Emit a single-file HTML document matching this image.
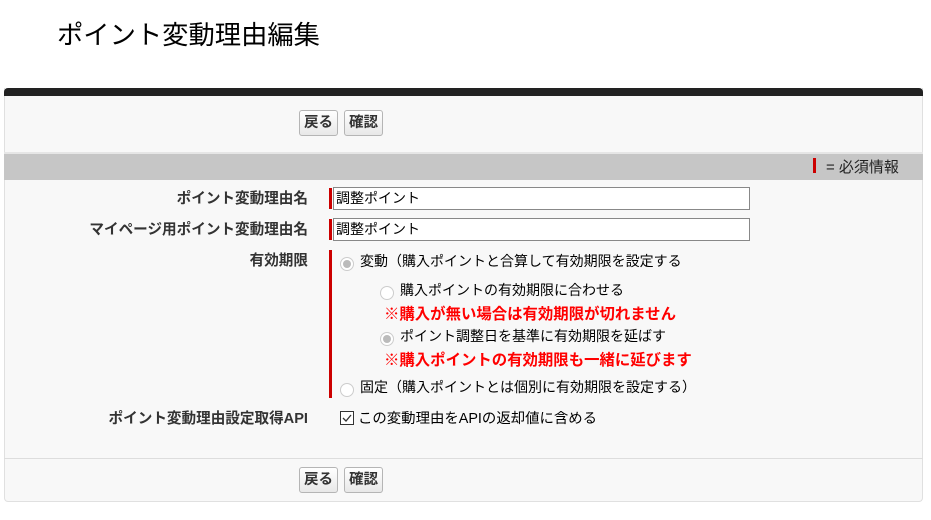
<!DOCTYPE html>
<html><head><meta charset="utf-8"><style>
*{margin:0;padding:0;box-sizing:border-box}
body{width:931px;height:520px;background:#fff;font-family:"Liberation Sans","Noto Sans CJK JP",sans-serif;font-size:13px;color:#000;position:relative;overflow:hidden}
.abs{position:absolute}
h1{position:absolute;left:57px;top:13px;font-size:26.3px;font-weight:normal;white-space:nowrap}
.panel{position:absolute;left:4px;top:88px;width:919px;height:414px;background:#f8f8f8;border:1px solid #e0e0e0;border-top:none;border-radius:0 0 4px 4px}
.bar{position:absolute;left:4px;top:88px;width:919px;height:8px;background:#222;border-radius:4px 4px 0 0}
.btn{position:absolute;height:26px;border:1px solid #b5b5b5;border-radius:3px;background:linear-gradient(#fff,#e8e8e8);font-weight:bold;font-size:14.5px;color:#333;line-height:24px;text-align:center;padding:0 4px}
.gray{position:absolute;left:4px;top:152px;width:919px;height:28px;background:#c6c6c6;border-top:2px solid #e6e6e6}
.lbl{position:absolute;right:623px;font-weight:bold;color:#333;font-size:14.6px;white-space:nowrap}
.inp{position:absolute;left:333px;width:417px;height:23px;border:1px solid #888;background:#fff;font-size:14px;line-height:21px;padding-left:2px}
.red{position:absolute;left:329px;width:3px;background:#c00}
.t{position:absolute;white-space:nowrap;font-size:14px}
.rt{position:absolute;white-space:nowrap;font-size:15.4px;color:#f00;font-weight:bold}
.rad{position:absolute;width:14px;height:14px;border-radius:50%;border:1px solid #ccc;background:#fff}
.rad.on::after{content:"";position:absolute;left:2px;top:2px;width:8px;height:8px;border-radius:50%;background:#bbb}
</style></head><body>
<h1>ポイント変動理由編集</h1>
<div class="panel"></div>
<div class="bar"></div>
<div class="btn" style="left:299px;top:110px">戻る</div>
<div class="btn" style="left:344px;top:110px">確認</div>
<div class="gray"></div>
<div class="abs" style="left:813px;top:158px;width:3px;height:15px;background:#c00"></div>
<div class="abs" style="left:826px;top:156px;font-size:15px;color:#222">= 必須情報</div>
<div class="lbl" style="top:187px">ポイント変動理由名</div>
<div class="red" style="top:188px;height:21px"></div>
<div class="inp" style="top:187px">調整ポイント</div>
<div class="lbl" style="top:218px">マイページ用ポイント変動理由名</div>
<div class="red" style="top:219px;height:21px"></div>
<div class="inp" style="top:218px">調整ポイント</div>
<div class="lbl" style="top:249px">有効期限</div>
<div class="red" style="top:250px;height:148px"></div>
<div class="rad on" style="left:340px;top:257px"></div>
<div class="t" style="left:360px;top:251px">変動（購入ポイントと合算して有効期限を設定する</div>
<div class="rad" style="left:380px;top:286px"></div>
<div class="t" style="left:400px;top:280px">購入ポイントの有効期限に合わせる</div>
<div class="rt" style="left:384px;top:302px">※購入が無い場合は有効期限が切れません</div>
<div class="rad on" style="left:380px;top:332px"></div>
<div class="t" style="left:400px;top:326px">ポイント調整日を基準に有効期限を延ばす</div>
<div class="rt" style="left:384px;top:348px">※購入ポイントの有効期限も一緒に延びます</div>
<div class="rad" style="left:340px;top:383px"></div>
<div class="t" style="left:360px;top:377px">固定（購入ポイントとは個別に有効期限を設定する）</div>
<div class="lbl" style="top:407px">ポイント変動理由設定取得API</div>
<div class="abs" style="left:340px;top:411px;width:14px;height:14px;border:1px solid #333;background:#fff"><svg width="12" height="12" viewBox="0 0 12 12"><path d="M2 6 L5 9 L10 3" stroke="#333" stroke-width="1.3" fill="none"/></svg></div>
<div class="t" style="left:358px;top:407px;font-size:14.4px">この変動理由をAPIの返却値に含める</div>
<div class="abs" style="left:4px;top:458px;width:919px;height:1px;background:#ddd"></div>
<div class="btn" style="left:299px;top:467px">戻る</div>
<div class="btn" style="left:344px;top:467px">確認</div>
</body></html>
